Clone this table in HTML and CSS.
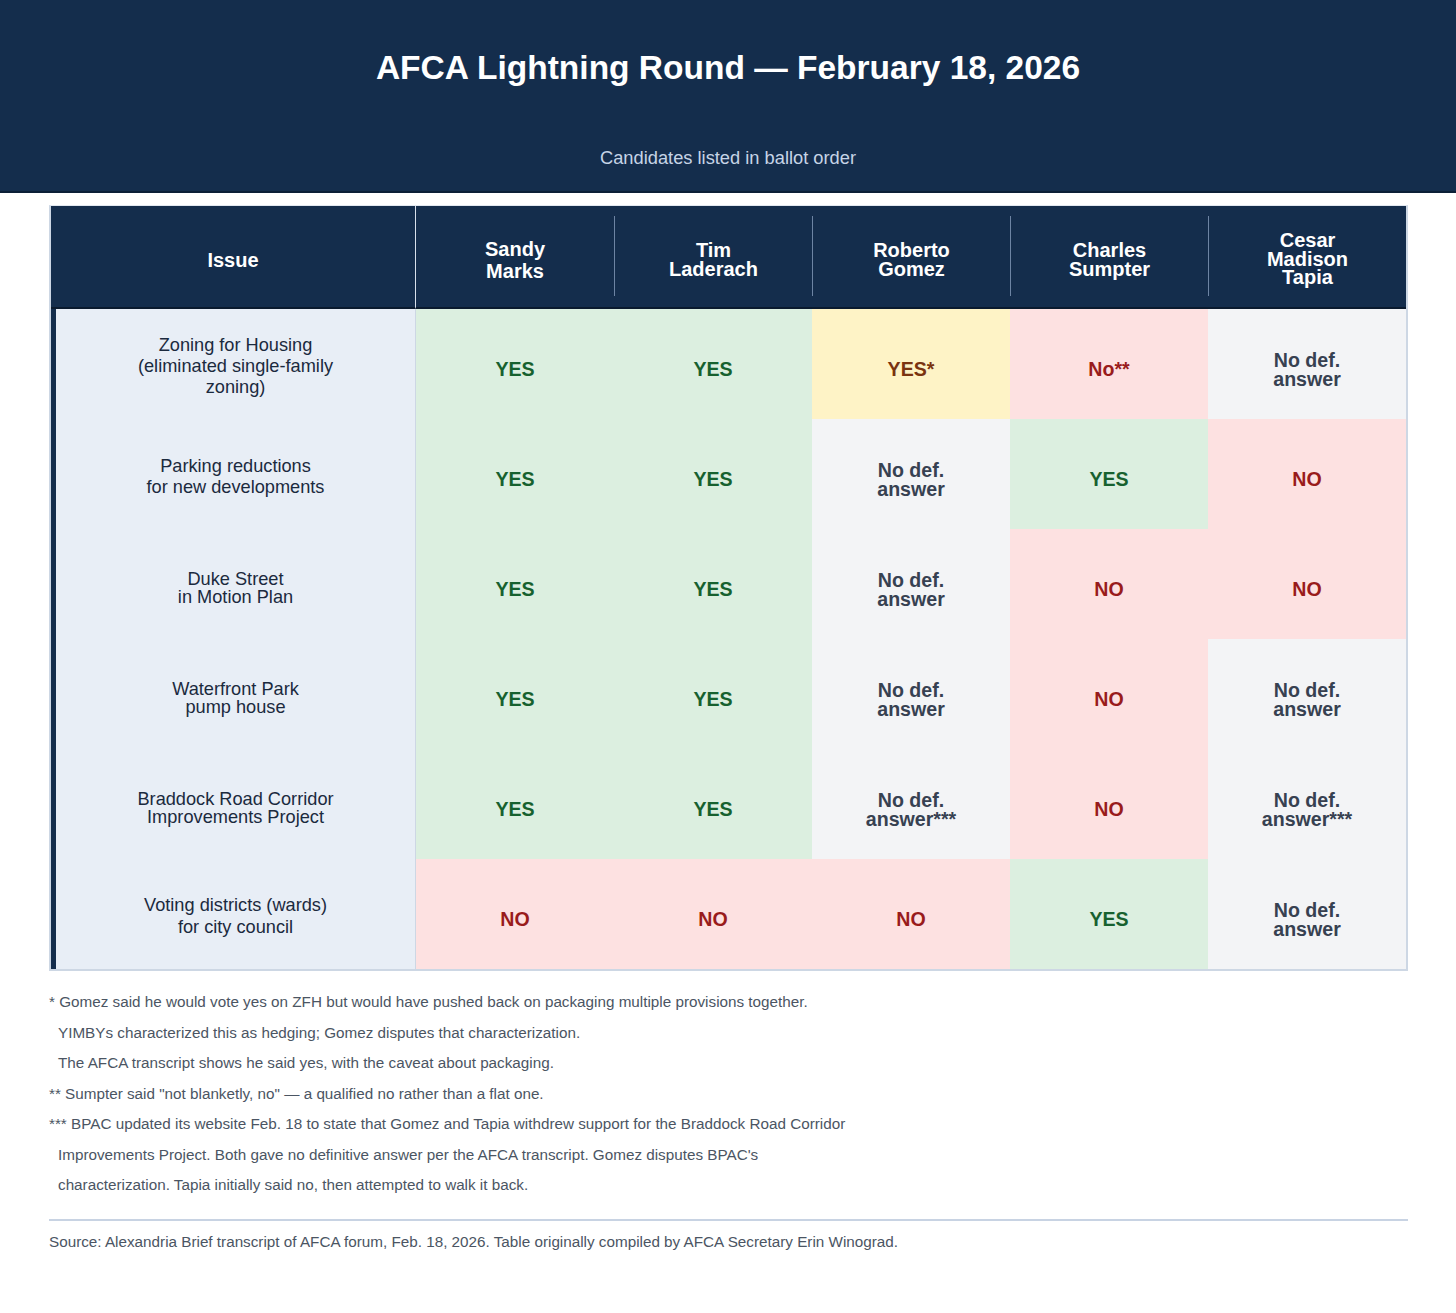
FILE: index.html
```html
<!DOCTYPE html>
<html lang="en">
<head>
<meta charset="utf-8">
<title>AFCA Lightning Round — February 18, 2026</title>
<link rel="stylesheet" href="styles.css">
</head>
<body>
<header class="banner">
  <h1 class="title">AFCA Lightning Round — February 18, 2026</h1>
  <p class="subtitle">Candidates listed in ballot order</p>
</header>

<main class="content">
  <table class="grid">
    <colgroup>
      <col class="col-issue">
      <col class="col-cand"><col class="col-cand"><col class="col-cand"><col class="col-cand"><col class="col-cand">
    </colgroup>
    <thead>
      <tr>
        <th class="h-issue"><div class="h-inner">Issue</div></th>
        <th class="h-cand"><div class="h-inner first loose">Sandy<br>Marks</div></th>
        <th class="h-cand"><div class="h-inner">Tim<br>Laderach</div></th>
        <th class="h-cand"><div class="h-inner">Roberto<br>Gomez</div></th>
        <th class="h-cand"><div class="h-inner">Charles<br>Sumpter</div></th>
        <th class="h-cand"><div class="h-inner three">Cesar<br>Madison<br>Tapia</div></th>
      </tr>
    </thead>
    <tbody>
      <tr>
        <td class="issue">Zoning for Housing<br>(eliminated single-family<br>zoning)</td>
        <td class="v yes">YES</td>
        <td class="v yes">YES</td>
        <td class="v star">YES*</td>
        <td class="v no">No**</td>
        <td class="v ndf">No def.<br>answer</td>
      </tr>
      <tr>
        <td class="issue">Parking reductions<br>for new developments</td>
        <td class="v yes">YES</td>
        <td class="v yes">YES</td>
        <td class="v ndf">No def.<br>answer</td>
        <td class="v yes">YES</td>
        <td class="v no">NO</td>
      </tr>
      <tr>
        <td class="issue tight">Duke Street<br>in Motion Plan</td>
        <td class="v yes">YES</td>
        <td class="v yes">YES</td>
        <td class="v ndf">No def.<br>answer</td>
        <td class="v no">NO</td>
        <td class="v no">NO</td>
      </tr>
      <tr>
        <td class="issue tight">Waterfront Park<br>pump house</td>
        <td class="v yes">YES</td>
        <td class="v yes">YES</td>
        <td class="v ndf">No def.<br>answer</td>
        <td class="v no">NO</td>
        <td class="v ndf">No def.<br>answer</td>
      </tr>
      <tr>
        <td class="issue tight">Braddock Road Corridor<br>Improvements Project</td>
        <td class="v yes">YES</td>
        <td class="v yes">YES</td>
        <td class="v ndf">No def.<br>answer***</td>
        <td class="v no">NO</td>
        <td class="v ndf">No def.<br>answer***</td>
      </tr>
      <tr>
        <td class="issue loose">Voting districts (wards)<br>for city council</td>
        <td class="v no">NO</td>
        <td class="v no">NO</td>
        <td class="v no">NO</td>
        <td class="v yes">YES</td>
        <td class="v ndf">No def.<br>answer</td>
      </tr>
    </tbody>
  </table>

  <section class="notes">
    <p class="note">* Gomez said he would vote yes on ZFH but would have pushed back on packaging multiple provisions together.</p>
    <p class="note cont">YIMBYs characterized this as hedging; Gomez disputes that characterization.</p>
    <p class="note cont">The AFCA transcript shows he said yes, with the caveat about packaging.</p>
    <p class="note">** Sumpter said "not blanketly, no" — a qualified no rather than a flat one.</p>
    <p class="note">*** BPAC updated its website Feb. 18 to state that Gomez and Tapia withdrew support for the Braddock Road Corridor</p>
    <p class="note cont">Improvements Project. Both gave no definitive answer per the AFCA transcript. Gomez disputes BPAC's</p>
    <p class="note cont">characterization. Tapia initially said no, then attempted to walk it back.</p>
  </section>

  <footer class="source">Source: Alexandria Brief transcript of AFCA forum, Feb. 18, 2026. Table originally compiled by AFCA Secretary Erin Winograd.</footer>
</main>
</body>
</html>
```

FILE: styles.css
```css
* { box-sizing: border-box; }

html, body {
  margin: 0;
  padding: 0;
  background: #ffffff;
  font-family: "Liberation Sans", Arial, sans-serif;
}

.banner {
  background: #142d4c;
  border-bottom: 2px solid #0c1f37;
  height: 193px;
  padding-top: 49px;
  text-align: center;
}

.title {
  margin: 0;
  font-size: 33.5px;
  line-height: 38px;
  font-weight: 700;
  color: #ffffff;
}

.subtitle {
  margin: 60px 0 0;
  font-size: 18.3px;
  line-height: 21px;
  color: #c6d4e6;
}

.content {
  padding: 12px 48px 40px 49px;
}

.grid {
  width: 1359px;
  table-layout: fixed;
  border-collapse: separate;
  border-spacing: 0;
  border: 2px solid #cdd7e4;
  border-top: 1px solid #e2e8f0;
}

.col-issue { width: 365px; }
.col-cand { width: 198px; }

thead th {
  background: #142d4c;
  color: #ffffff;
  font-size: 20px;
  line-height: 19px;
  font-weight: 700;
  height: 101px;
  padding: 10px 0 11px;
  border-bottom: 2px solid #0a1a2e;
  vertical-align: middle;
}

.h-issue {
  border-right: 1px solid #d8e0eb;
}

.h-inner {
  height: 80px;
  display: flex;
  align-items: center;
  justify-content: center;
  text-align: center;
  padding-top: 8px;
  border-left: 1px solid #6d84a3;
}

.h-issue .h-inner,
.h-inner.first {
  border-left: none;
}

.h-inner.loose { line-height: 22px; }
.h-inner.three { line-height: 18.5px; padding-top: 6px; }

tbody td {
  height: 110px;
  padding: 0;
  text-align: center;
  vertical-align: middle;
}

.issue {
  background: #e8eef6;
  color: #1b2a3e;
  font-size: 18.2px;
  line-height: 21px;
  border-left: 5px solid #142d4c;
  border-right: 1px solid #cdd7e4;
  padding-top: 5px !important;
}

.issue.tight { line-height: 18px; padding-top: 8px !important; }
.issue.loose { line-height: 22px; padding-top: 4px !important; }

.v {
  font-size: 19.6px;
  line-height: 19px;
  font-weight: 700;
  padding-top: 11px !important;
}

.yes { background: #dcefe0; color: #17612f; }
.no { background: #fde1e1; color: #991b1b; }
.star { background: #fef3c6; color: #7a330f; }
.ndf { background: #f3f4f6; color: #374151; }

.notes {
  margin-top: 16px;
}

.note {
  margin: 0;
  font-size: 15.25px;
  line-height: 30.5px;
  color: #4b5563;
}

.note.cont { padding-left: 9px; }

.source {
  margin-top: 18px;
  border-top: 2px solid #c8d3e3;
  padding-top: 12px;
  font-size: 15.25px;
  line-height: 18px;
  color: #4b5563;
}
```
